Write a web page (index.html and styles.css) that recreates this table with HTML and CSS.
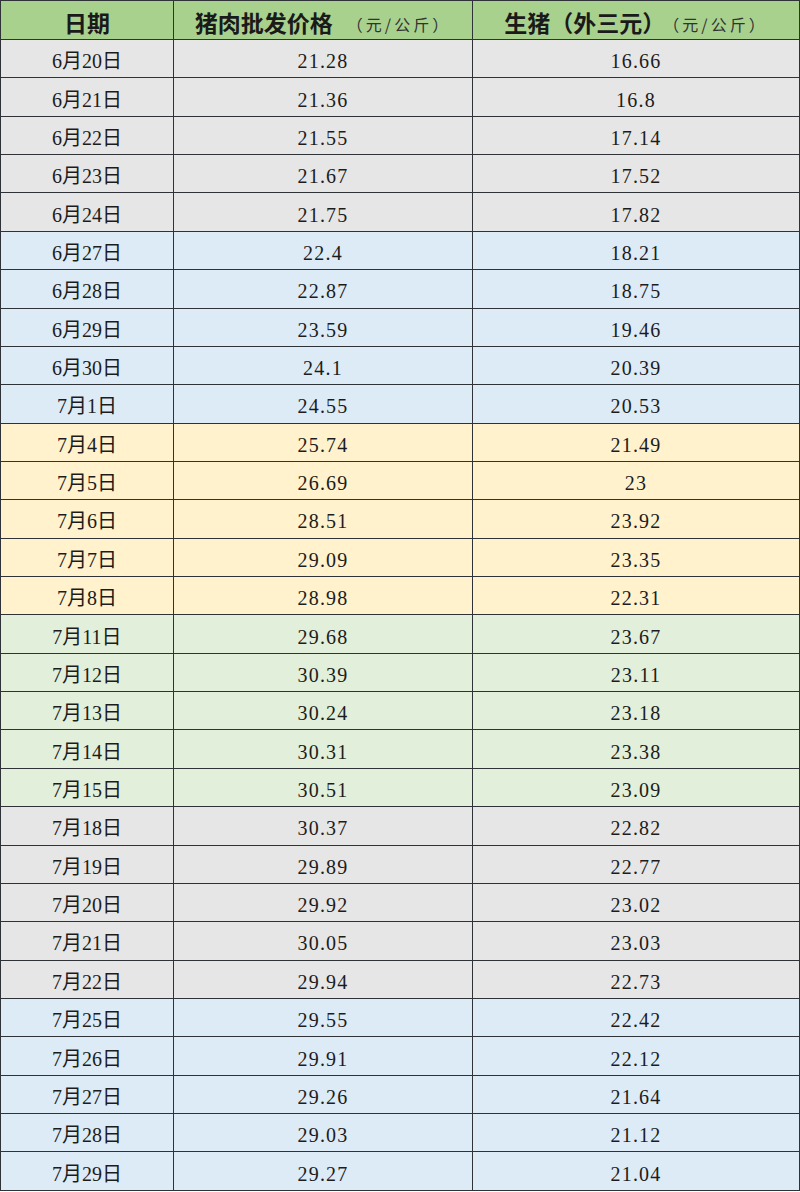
FILE: index.html
```html
<!DOCTYPE html>
<html lang="zh">
<head>
<meta charset="utf-8">
<link rel="stylesheet" href="styles.css">
</head>
<body>
<div class="sheet">
  <div class="cell head">日期</div>
  <div class="cell head">猪肉批发价格<span class="unit gap">（元/公斤）</span></div>
  <div class="cell head shift">生猪（外三元）<span class="unit tight">（元/公斤）</span></div>

  <div class="cell gray">6月20日</div><div class="cell gray num">21.28</div><div class="cell gray num">16.66</div>
  <div class="cell gray">6月21日</div><div class="cell gray num">21.36</div><div class="cell gray num">16.8</div>
  <div class="cell gray">6月22日</div><div class="cell gray num">21.55</div><div class="cell gray num">17.14</div>
  <div class="cell gray">6月23日</div><div class="cell gray num">21.67</div><div class="cell gray num">17.52</div>
  <div class="cell gray">6月24日</div><div class="cell gray num">21.75</div><div class="cell gray num">17.82</div>

  <div class="cell blue">6月27日</div><div class="cell blue num">22.4</div><div class="cell blue num">18.21</div>
  <div class="cell blue">6月28日</div><div class="cell blue num">22.87</div><div class="cell blue num">18.75</div>
  <div class="cell blue">6月29日</div><div class="cell blue num">23.59</div><div class="cell blue num">19.46</div>
  <div class="cell blue">6月30日</div><div class="cell blue num">24.1</div><div class="cell blue num">20.39</div>
  <div class="cell blue">7月1日</div><div class="cell blue num">24.55</div><div class="cell blue num">20.53</div>

  <div class="cell yellow">7月4日</div><div class="cell yellow num">25.74</div><div class="cell yellow num">21.49</div>
  <div class="cell yellow">7月5日</div><div class="cell yellow num">26.69</div><div class="cell yellow num">23</div>
  <div class="cell yellow">7月6日</div><div class="cell yellow num">28.51</div><div class="cell yellow num">23.92</div>
  <div class="cell yellow">7月7日</div><div class="cell yellow num">29.09</div><div class="cell yellow num">23.35</div>
  <div class="cell yellow">7月8日</div><div class="cell yellow num">28.98</div><div class="cell yellow num">22.31</div>

  <div class="cell green">7月11日</div><div class="cell green num">29.68</div><div class="cell green num">23.67</div>
  <div class="cell green">7月12日</div><div class="cell green num">30.39</div><div class="cell green num">23.11</div>
  <div class="cell green">7月13日</div><div class="cell green num">30.24</div><div class="cell green num">23.18</div>
  <div class="cell green">7月14日</div><div class="cell green num">30.31</div><div class="cell green num">23.38</div>
  <div class="cell green">7月15日</div><div class="cell green num">30.51</div><div class="cell green num">23.09</div>

  <div class="cell gray">7月18日</div><div class="cell gray num">30.37</div><div class="cell gray num">22.82</div>
  <div class="cell gray">7月19日</div><div class="cell gray num">29.89</div><div class="cell gray num">22.77</div>
  <div class="cell gray">7月20日</div><div class="cell gray num">29.92</div><div class="cell gray num">23.02</div>
  <div class="cell gray">7月21日</div><div class="cell gray num">30.05</div><div class="cell gray num">23.03</div>
  <div class="cell gray">7月22日</div><div class="cell gray num">29.94</div><div class="cell gray num">22.73</div>

  <div class="cell blue">7月25日</div><div class="cell blue num">29.55</div><div class="cell blue num">22.42</div>
  <div class="cell blue">7月26日</div><div class="cell blue num">29.91</div><div class="cell blue num">22.12</div>
  <div class="cell blue">7月27日</div><div class="cell blue num">29.26</div><div class="cell blue num">21.64</div>
  <div class="cell blue">7月28日</div><div class="cell blue num">29.03</div><div class="cell blue num">21.12</div>
  <div class="cell blue">7月29日</div><div class="cell blue num">29.27</div><div class="cell blue num">21.04</div>
</div>
</body>
</html>
```
FILE: styles.css
```css
html, body {
  margin: 0;
  padding: 0;
  background: #ffffff;
}

.sheet {
  width: 800px;
  box-sizing: border-box;
  display: grid;
  grid-template-columns: 172px 298px 1fr;
  grid-template-rows: 38px repeat(30, 37.366px);
  gap: 1px;
  padding: 1px;
  background: #2f3337;
  font-family: "Liberation Serif", "Noto Sans CJK SC", serif;
  color: #1c1c1c;
}

.cell {
  display: flex;
  align-items: center;
  justify-content: center;
  padding-top: 5px;
  box-sizing: border-box;
  font-size: 20px;
  line-height: 1;
  white-space: nowrap;
}

.num {
  letter-spacing: 1.2px;
}

.head {
  background: #a9d18e;
  font-family: "Noto Sans CJK SC", sans-serif;
  font-weight: 700;
  font-size: 23px;
  padding-top: 5px;
  color: #1a1a1a;
}

.unit {
  font-weight: 400;
  font-size: 16px;
  letter-spacing: 3px;
  color: #333333;
  padding-top: 2px;
  padding-left: 6px;
}

.unit.gap {
  margin-left: 8px;
}

.unit.tight {
  padding-left: 0;
  margin-left: -2px;
}

.gray { background: #e7e6e6; }
.blue { background: #ddebf7; }
.yellow { background: #fff2cc; }
.green { background: #e2efda; }
```
